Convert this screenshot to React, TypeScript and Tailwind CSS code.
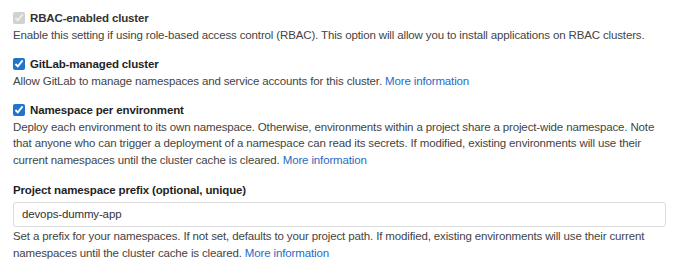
import { useState } from "react";

function CheckRow({
  label,
  checked,
  disabled,
  onChange,
  children,
}: {
  label: string;
  checked: boolean;
  disabled?: boolean;
  onChange?: () => void;
  children: React.ReactNode;
}) {
  return (
    <div className="mb-[13px]">
      <label className="flex items-center gap-[5px]">
        <input
          type="checkbox"
          checked={checked}
          disabled={disabled}
          onChange={onChange}
          className="m-0 h-[12px] w-[12px] accent-[#1f75cb]"
        />
        <span className={`font-bold ${disabled ? "text-[#333]" : "text-[#1f1f1f]"}`}>
          {label}
        </span>
      </label>
      <p className="text-[#444]">{children}</p>
    </div>
  );
}

const More = () => (
  <a href="#" className="text-[#1f6bc4]">
    More information
  </a>
);

export default function App() {
  const [managed, setManaged] = useState(true);
  const [perEnv, setPerEnv] = useState(true);
  const [prefix, setPrefix] = useState("devops-dummy-app");

  return (
    <div
      className="w-[690px] h-[267px] bg-white pl-[13px] pr-[24px] pt-[10px] text-[11.5px] tracking-[-0.14px] leading-[16.5px] overflow-hidden"
      style={{ fontFamily: "'Liberation Sans', Arial, sans-serif" }}
    >
      <CheckRow label="RBAC-enabled cluster" checked disabled>
        Enable this setting if using role-based access control (RBAC). This option will allow you
        to install applications on RBAC clusters.
      </CheckRow>
      <CheckRow
        label="GitLab-managed cluster"
        checked={managed}
        onChange={() => setManaged(!managed)}
      >
        Allow GitLab to manage namespaces and service accounts for this cluster. <More />
      </CheckRow>
      <div className="mb-[14px]">
        <CheckRowInner
          label="Namespace per environment"
          checked={perEnv}
          onChange={() => setPerEnv(!perEnv)}
        />
        <p className="text-[#444]">
          Deploy each environment to its own namespace. Otherwise, environments within a project
          share a project-wide namespace. Note that anyone who can trigger a deployment of a
          namespace can read its secrets. If modified, existing environments will use their
          current namespaces until the cluster cache is cleared. <More />
        </p>
      </div>
      <label className="block font-bold text-[#1f1f1f]">
        Project namespace prefix (optional, unique)
      </label>
      <input
        type="text"
        value={prefix}
        onChange={(e) => setPrefix(e.target.value)}
        className="mt-[3px] block h-[25px] w-full rounded-[3px] border border-[#dcdcde] px-[8px] text-[#333] outline-none"
      />
      <p className="mt-[1.5px] text-[#444]">
        Set a prefix for your namespaces. If not set, defaults to your project path. If modified,
        existing environments will use their current namespaces until the cluster cache is
        cleared. <More />
      </p>
    </div>
  );
}

function CheckRowInner({
  label,
  checked,
  onChange,
}: {
  label: string;
  checked: boolean;
  onChange: () => void;
}) {
  return (
    <label className="flex items-center gap-[5px]">
      <input
        type="checkbox"
        checked={checked}
        onChange={onChange}
        className="m-0 h-[12px] w-[12px] accent-[#1f75cb]"
      />
      <span className="font-bold text-[#1f1f1f]">{label}</span>
    </label>
  );
}
